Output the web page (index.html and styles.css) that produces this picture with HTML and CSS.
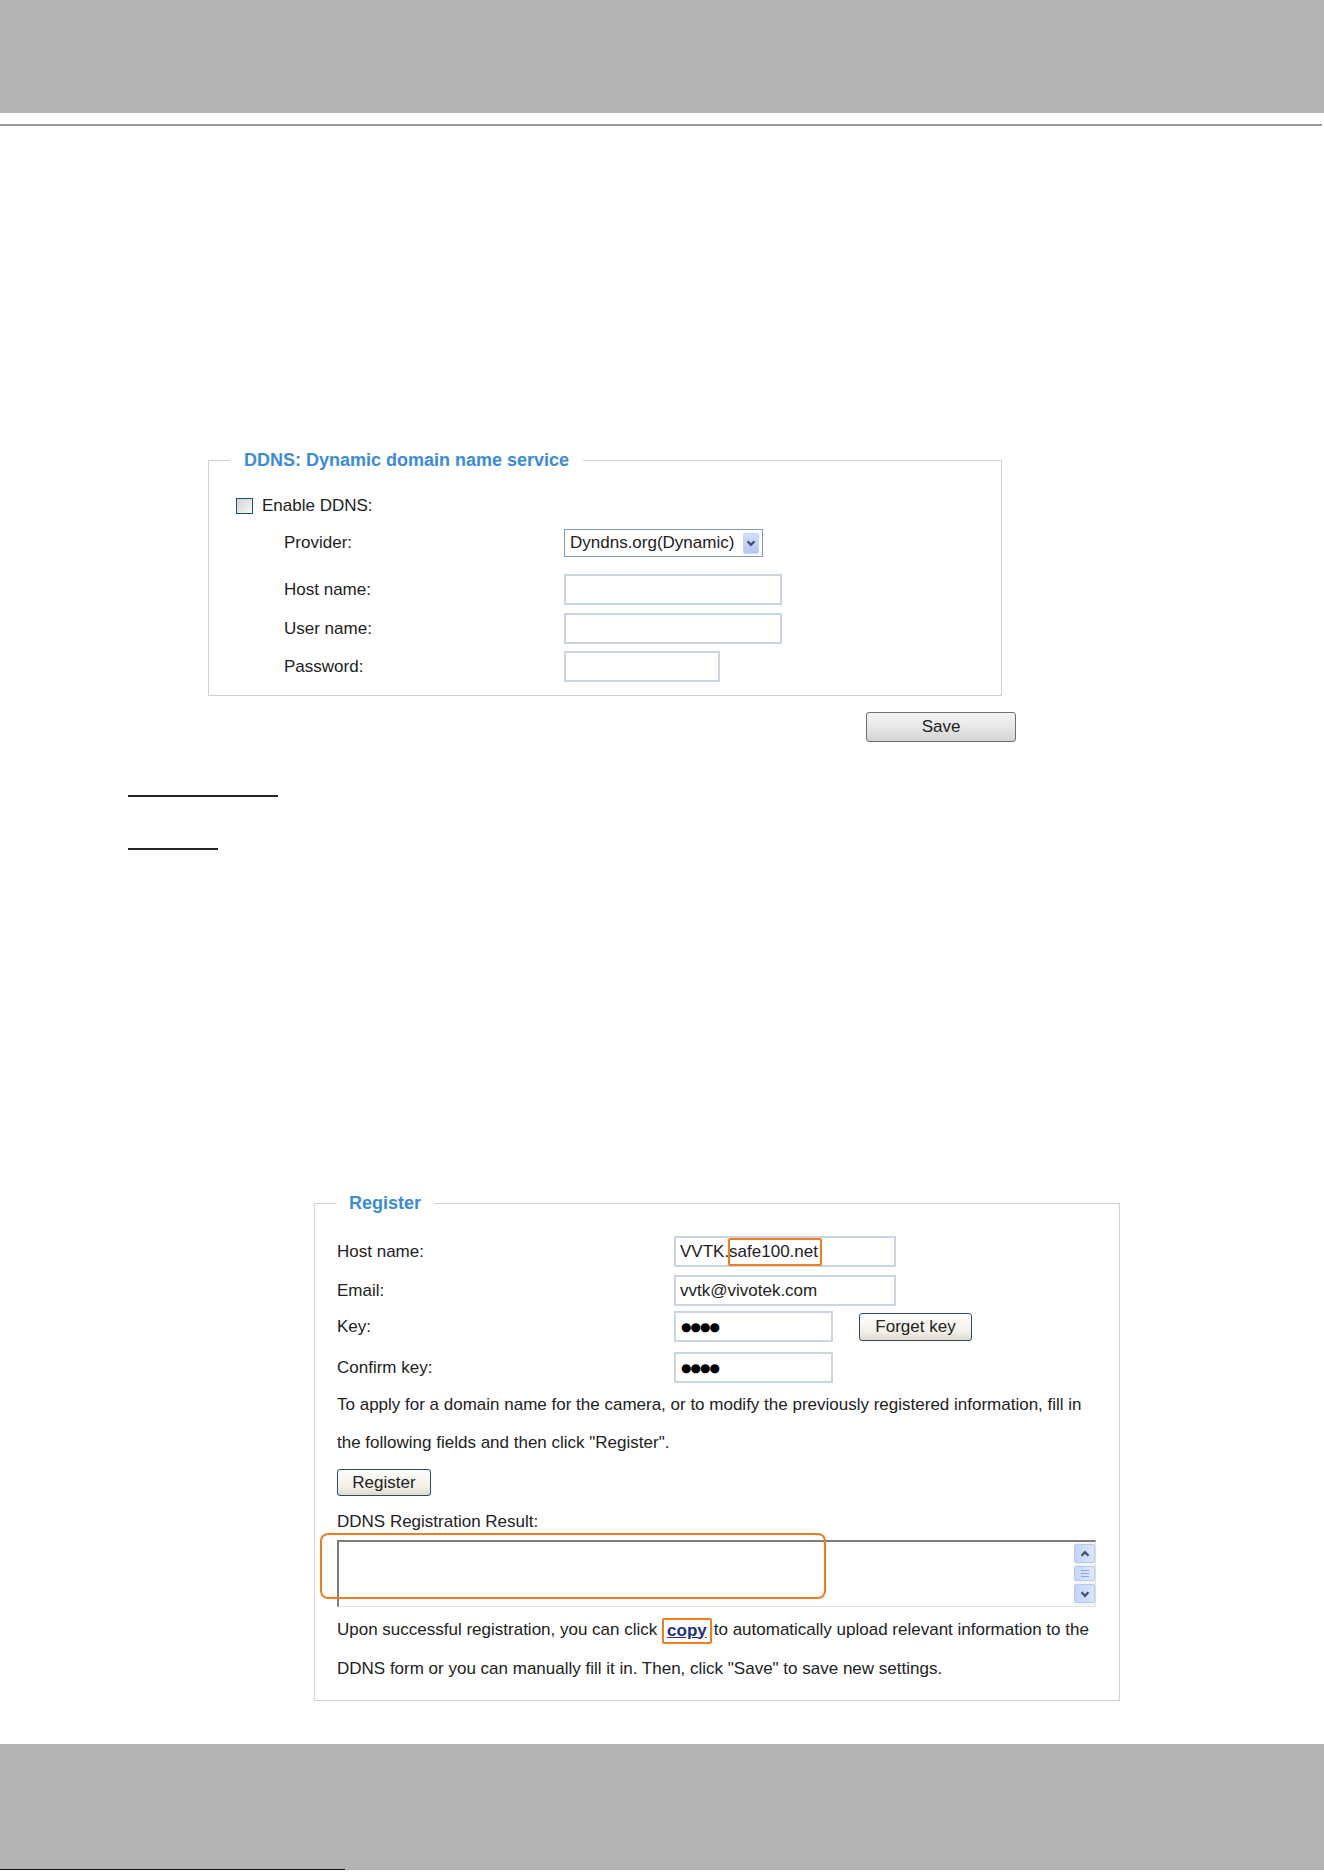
FILE: index.html
```html
<!DOCTYPE html>
<html lang="en">
<head>
  <meta charset="UTF-8">
  <title>DDNS - Dynamic domain name service</title>
  <link rel="stylesheet" href="styles.css">
</head>
<body>
  <div class="top-band"></div>
  <div class="top-rule"></div>

  <div class="page">
    <fieldset class="box ddns">
      <legend>DDNS: Dynamic domain name service</legend>
      <div class="row row-check">
        <span class="checkbox"></span>
        <span>Enable DDNS:</span>
      </div>
      <div class="row row-provider">
        <span class="label">Provider:</span>
        <div class="select">
          <span class="select-text">Dyndns.org(Dynamic)</span>
          <span class="select-arrow">
            <svg viewBox="0 0 10 10" width="10" height="10"><path d="M1.5 3.2 L5 6.8 L8.5 3.2" fill="none" stroke="#3d4f7a" stroke-width="2.2"/></svg>
          </span>
        </div>
      </div>
      <div class="row row-host">
        <span class="label">Host name:</span>
        <input class="field wide" type="text">
      </div>
      <div class="row row-user">
        <span class="label">User name:</span>
        <input class="field wide" type="text">
      </div>
      <div class="row row-pass">
        <span class="label">Password:</span>
        <input class="field short" type="password">
      </div>
    </fieldset>

    <div class="save-row">
      <button class="btn-gray">Save</button>
    </div>

    <div class="doc-lines">
      <div class="ul-line first"></div>
      <div class="ul-line second"></div>
    </div>

    <fieldset class="box register">
      <legend>Register</legend>
      <div class="reg-row r-host">
        <span class="label">Host name:</span>
        <div class="mark-wrap">
          <input class="field reg-wide" type="text" value="VVTK.safe100.net">
          <span class="mark mark-host"></span>
        </div>
      </div>
      <div class="reg-row r-email">
        <span class="label">Email:</span>
        <input class="field reg-wide" type="text" value="vvtk@vivotek.com">
      </div>
      <div class="reg-row r-key">
        <span class="label">Key:</span>
        <input class="field reg-short dots" type="text" value="●●●●">
        <button class="btn-xp forget">Forget key</button>
      </div>
      <div class="reg-row r-confirm">
        <span class="label">Confirm key:</span>
        <input class="field reg-short dots" type="text" value="●●●●">
      </div>
      <p class="para p-apply">To apply for a domain name for the camera, or to modify the previously registered information, fill in the following fields and then click "Register".</p>
      <button class="btn-xp register-btn">Register</button>
      <div class="result-label">DDNS Registration Result:</div>
      <div class="mark-wrap result-wrap">
        <div class="result">
          <div class="scrollbar">
            <span class="sb-btn">
              <svg viewBox="0 0 10 10" width="10" height="10"><path d="M1.5 6.8 L5 3.2 L8.5 6.8" fill="none" stroke="#3d4f7a" stroke-width="2.2"/></svg>
            </span>
            <span class="sb-thumb"><span></span><span></span><span></span></span>
            <span class="sb-btn">
              <svg viewBox="0 0 10 10" width="10" height="10"><path d="M1.5 3.2 L5 6.8 L8.5 3.2" fill="none" stroke="#3d4f7a" stroke-width="2.2"/></svg>
            </span>
          </div>
        </div>
        <span class="mark mark-result"></span>
      </div>
      <p class="para p-upon">Upon successful registration, you can click <span class="copy-mark"><a href="#" class="copy">copy</a></span>to automatically upload relevant information to the DDNS form or you can manually fill it in. Then, click "Save" to save new settings.</p>
    </fieldset>
  </div>

  <div class="bottom-band">
    <div class="bottom-edge"></div>
  </div>
</body>
</html>
```

FILE: styles.css
```css
* { box-sizing: border-box; }
body {
  margin: 0;
  padding: 0;
  width: 1324px;
  background: #fff;
  font-family: "Liberation Sans", Arial, sans-serif;
  font-size: 17px;
  color: #222;
}
.top-band {
  height: 113px;
  background: #b3b4b6;
}
.top-rule {
  margin-top: 11px;
  width: 1322px;
  height: 2px;
  background: #999a9c;
}
.page {
  display: flex;
  flex-direction: column;
}

/* fieldsets */
.box {
  margin: 0;
  padding: 0;
  border: 1px solid #d3d0ca;
  min-width: 0;
}
.box legend {
  font-size: 18px;
  line-height: 20px;
  font-weight: bold;
  color: #3b8bd9;
}
.ddns {
  margin-top: 324px;
  margin-left: 208px;
  width: 794px;
  padding: 0 0 13px 27px;
}
.ddns legend {
  margin-left: -6px;
  padding: 0 14px;
}
.row {
  display: flex;
  align-items: center;
}
.row .label {
  width: 280px;
  margin-left: 48px;
}
.row-check {
  height: 20px;
  margin-top: 26px;
  gap: 9px;
}
.checkbox {
  width: 17px;
  height: 16px;
  border: 1px solid #1c5180;
  background: linear-gradient(135deg, #d6d5cf, #f5f5f2);
}
.row-provider { height: 28px; margin-top: 13px; }
.row-host { height: 31px; margin-top: 17px; }
.row-user { height: 31px; margin-top: 8px; }
.row-pass { height: 31px; margin-top: 7px; }

.select {
  width: 199px;
  height: 28px;
  border: 1px solid #7f9db9;
  display: flex;
  align-items: center;
  justify-content: space-between;
  padding: 0 3px 0 5px;
  background: #fff;
}
.select-arrow {
  width: 16px;
  height: 21px;
  background: linear-gradient(180deg, #d2defb, #b5c8f4);
  border: 1px solid #c4d4f7;
  border-radius: 2px;
  display: flex;
  align-items: center;
  justify-content: center;
}
.field {
  height: 31px;
  border: 2px solid #cdd4e2;
  padding: 0 4px;
  font-family: inherit;
  font-size: 17px;
  color: #222;
  background: #fff;
  outline: none;
}
.field.dots {
  font-family: "DejaVu Sans", sans-serif;
  font-size: 12px;
  letter-spacing: -1px;
  color: #000;
  padding-left: 5px;
}
.field.wide { width: 218px; }
.field.short { width: 156px; }

.save-row {
  margin-top: 16px;
  margin-left: 866px;
}
.btn-gray {
  width: 150px;
  height: 30px;
  font-family: inherit;
  font-size: 17px;
  color: #222;
  border: 1px solid #6f6f6f;
  border-radius: 3px;
  background: linear-gradient(180deg, #f4f4f4, #e4e4e4 60%, #d2d2d2);
  padding: 0;
}

.doc-lines {
  margin-left: 128px;
}
.ul-line {
  height: 2px;
  background: #262626;
}
.ul-line.first { width: 150px; margin-top: 53px; }
.ul-line.second { width: 90px; margin-top: 51px; }

/* register */
.register {
  margin-top: 343px;
  margin-left: 314px;
  width: 806px;
  padding: 0 0 12px 22px;
}
.register legend {
  margin-left: -1px;
  padding: 0 13px;
}
.reg-row {
  display: flex;
  align-items: center;
  height: 31px;
}
.reg-row .label { width: 337px; }
.r-host { margin-top: 23px; }
.r-email { margin-top: 8px; }
.r-key { margin-top: 5px; }
.r-confirm { margin-top: 10px; }
.field.reg-wide { width: 222px; }
.field.reg-short { width: 159px; }

.btn-xp {
  font-family: inherit;
  font-size: 17px;
  color: #222;
  border: 1px solid #2b4a6e;
  border-radius: 3px;
  background: linear-gradient(180deg, #fefefd, #f1efe8 70%, #dcd8cc);
  padding: 0;
}
.forget {
  width: 113px;
  height: 28px;
  margin-left: 26px;
}
.register-btn {
  width: 94px;
  height: 27px;
  margin-top: 7px;
}
.para {
  margin: 0;
  width: 760px;
}
.p-apply {
  margin-top: 3px;
  line-height: 38px;
}
.result-label {
  margin-top: 16px;
  line-height: 20px;
}
.mark-wrap {
  position: relative;
}
.result-wrap {
  margin-top: 8px;
  width: 759px;
}
.result {
  height: 67px;
  border-top: 2px solid #7c7c7c;
  border-left: 2px solid #7c7c7c;
  border-right: 1px solid #e2e2e2;
  border-bottom: 1px solid #e2e2e2;
  display: flex;
  justify-content: flex-end;
}
.scrollbar {
  width: 21px;
  display: flex;
  flex-direction: column;
  gap: 3px;
  padding-top: 2px;
  background: #f5f5f0;
}
.sb-btn {
  height: 19px;
  background: linear-gradient(90deg, #c2d3fb, #dbe5fd);
  border: 1px solid #b7c9f3;
  border-radius: 2px;
  display: flex;
  align-items: center;
  justify-content: center;
}
.sb-thumb {
  height: 15px;
  background: linear-gradient(90deg, #c7d6fb, #dfe8fe);
  border: 1px solid #b7c9f3;
  border-radius: 2px;
  display: flex;
  flex-direction: column;
  justify-content: center;
  align-items: center;
  gap: 2px;
}
.sb-thumb span {
  width: 8px;
  height: 1px;
  background: #8ea6d8;
}
.p-upon {
  margin-top: 3px;
  line-height: 39px;
}
.copy-mark {
  display: inline-block;
  line-height: 22px;
  border: 2px solid #ef7d22;
  border-radius: 2px;
  padding: 0 3px;
  margin-right: 2px;
  vertical-align: middle;
}
.copy {
  color: #1d2f8c;
  font-weight: bold;
  text-decoration: underline;
}

/* orange highlight marks */
.mark {
  position: absolute;
  border: 2px solid #ef7d22;
}
.mark-host {
  left: 54px;
  top: 2px;
  width: 94px;
  height: 28px;
  border-radius: 2px;
}
.mark-result {
  left: -17px;
  top: -7px;
  width: 506px;
  height: 66px;
  border-radius: 8px;
}

.bottom-band {
  margin-top: 43px;
  height: 126px;
  background: #b3b4b6;
  display: flex;
  flex-direction: column;
  justify-content: flex-end;
}
.bottom-edge {
  width: 345px;
  height: 1px;
  background: #111;
}
```
